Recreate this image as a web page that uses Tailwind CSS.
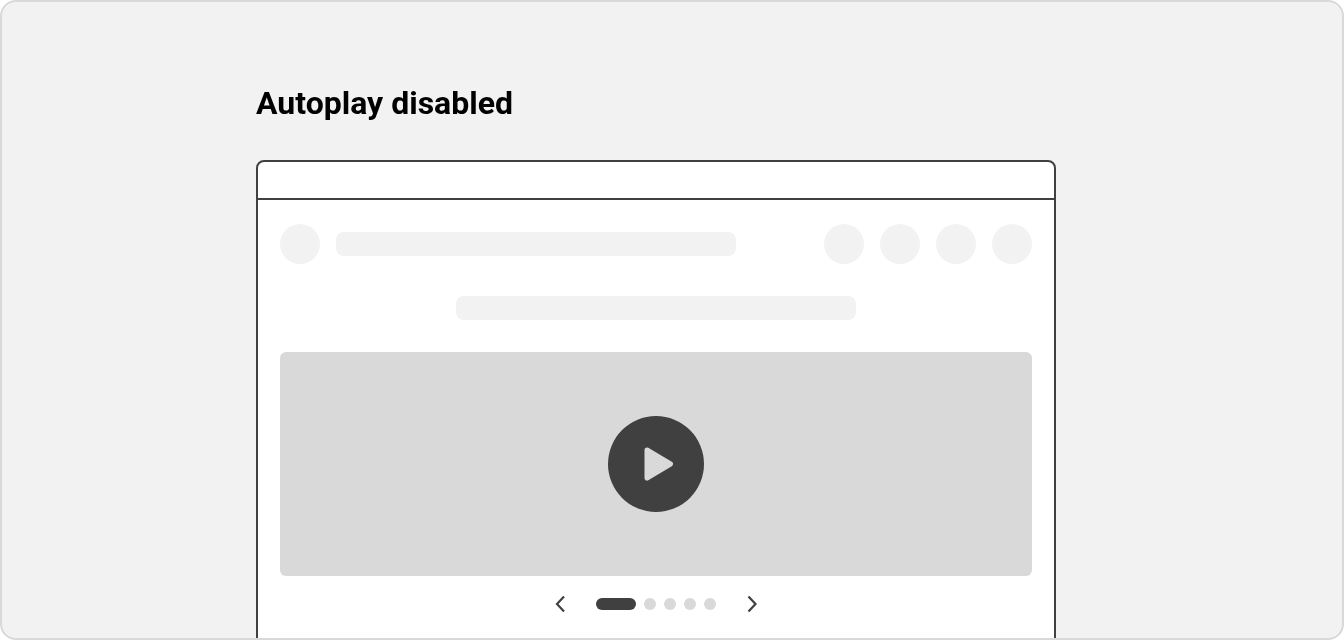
<!DOCTYPE html>
<html lang="en">
<head>
    <meta charset="UTF-8">
    <meta name="viewport" content="width=device-width, initial-scale=1.0">
    <title>Autoplay disabled</title>
    <script src="https://cdn.jsdelivr.net/npm/@tailwindcss/browser@4"></script>
</head>
<body class="bg-white">
    <div class="w-[1344px] h-[640px] overflow-hidden rounded-2xl border-2 border-[#d9d9d9] bg-[#f2f2f2] pl-[254px] pt-[81px]">
        <h1 class="h-[40px] font-['Roboto',sans-serif] text-[32px] leading-[40px] font-bold text-black antialiased transform-gpu">Autoplay disabled</h1>

        <!-- Browser frame -->
        <div class="mt-[37px] w-[800px] h-[600px] rounded-t-lg border-2 border-[#404040] bg-white">
            <div class="h-[38px] border-b-2 border-[#404040]"></div>
            <div class="px-[22px] pt-[24px]">
                <!-- Top bar -->
                <div class="flex items-center">
                    <div class="size-10 rounded-full bg-[#f2f2f2]"></div>
                    <div class="ml-4 h-6 w-[400px] rounded-lg bg-[#f2f2f2]"></div>
                    <div class="ml-auto flex gap-4">
                        <div class="size-10 rounded-full bg-[#f2f2f2]"></div>
                        <div class="size-10 rounded-full bg-[#f2f2f2]"></div>
                        <div class="size-10 rounded-full bg-[#f2f2f2]"></div>
                        <div class="size-10 rounded-full bg-[#f2f2f2]"></div>
                    </div>
                </div>
                <div class="mx-auto mt-8 h-6 w-[400px] rounded-lg bg-[#f2f2f2]"></div>

                <!-- Video -->
                <div class="mt-8 flex h-[224px] items-center justify-center rounded-md bg-[#d9d9d9]">
                    <div class="flex size-24 items-center justify-center rounded-full bg-[#404040]">
                        <svg xmlns="http://www.w3.org/2000/svg" width="96" height="96" viewBox="0 0 96 96">
                            <path d="M39 34 62.5 48 39 62z" fill="#d9d9d9" stroke="#d9d9d9" stroke-width="5" stroke-linejoin="round"/>
                        </svg>
                    </div>
                </div>

                <!-- Pagination -->
                <div class="relative mt-[22px] flex h-3 items-center justify-center gap-2">
                    <svg class="absolute left-[274px] top-[-4px]" xmlns="http://www.w3.org/2000/svg" width="12" height="20" viewBox="0 0 12 20" fill="none" stroke="#404040" stroke-width="2.2">
                        <path d="M10 2.5 3 10l7 7.5"/>
                    </svg>
                    <div class="h-3 w-10 rounded-full bg-[#404040]"></div>
                    <div class="size-3 rounded-full bg-[#d9d9d9]"></div>
                    <div class="size-3 rounded-full bg-[#d9d9d9]"></div>
                    <div class="size-3 rounded-full bg-[#d9d9d9]"></div>
                    <div class="size-3 rounded-full bg-[#d9d9d9]"></div>
                    <svg class="absolute left-[466px] top-[-4px]" xmlns="http://www.w3.org/2000/svg" width="12" height="20" viewBox="0 0 12 20" fill="none" stroke="#404040" stroke-width="2.2">
                        <path d="M2.5 2.5 9.5 10l-7 7.5"/>
                    </svg>
                </div>
            </div>
        </div>
    </div>
</body>
</html>
